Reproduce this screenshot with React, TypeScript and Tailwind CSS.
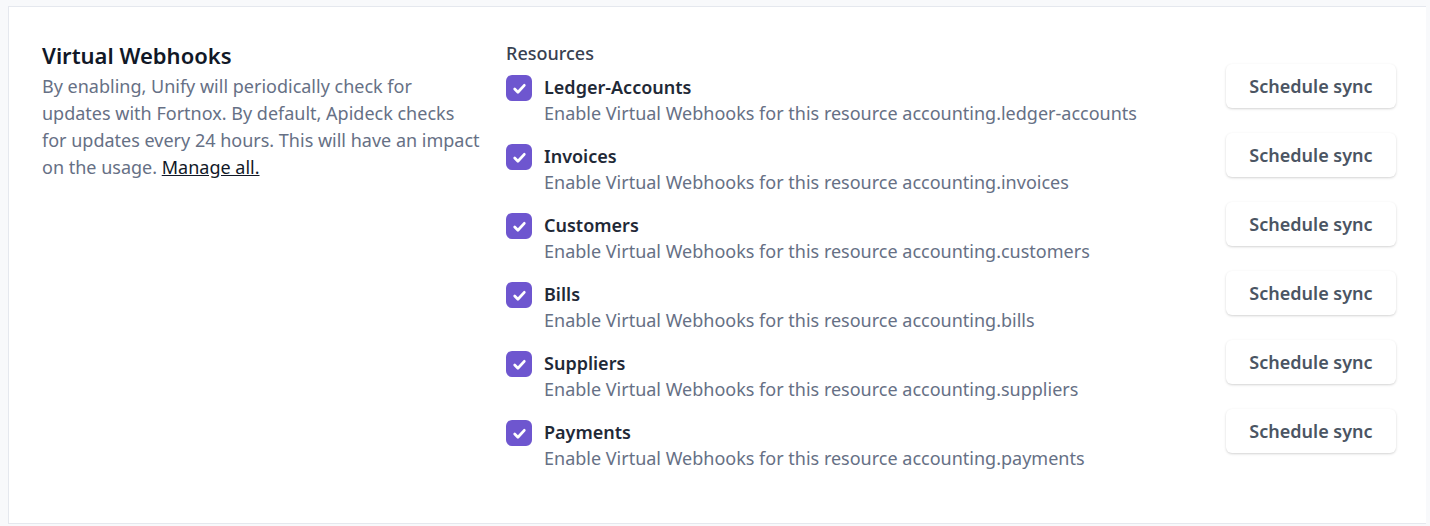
const resources = [
  { name: "Ledger-Accounts", id: "ledger-accounts" },
  { name: "Invoices", id: "invoices" },
  { name: "Customers", id: "customers" },
  { name: "Bills", id: "bills" },
  { name: "Suppliers", id: "suppliers" },
  { name: "Payments", id: "payments" },
];

export default function App() {
  return (
    <div className="flex h-[526px] w-[1430px] bg-[#f8f9fb] font-['Inter',sans-serif]">
      <div className="ml-2 mt-[6px] mb-[2px] flex w-[1418px] border-t border-l border-b border-[#e5e8ee] bg-white pl-[33px] pr-[30px] pt-[32px]">
        <div className="w-[440px] shrink-0">
          <h2 className="text-[22px] font-semibold leading-[32px] text-[#111827]">Virtual Webhooks</h2>
          <p className="mt-[2px] text-[18px] leading-[27px] text-[#667085]">
            By enabling, Unify will periodically check for updates with Fortnox. By default, Apideck checks for updates
            every 24 hours. This will have an impact on the usage.{" "}
            <a className="text-[#111827] underline">Manage all.</a>
          </p>
        </div>
        <div className="ml-[24px] flex-1">
          <div className="mt-[1px] text-[18px] font-medium leading-[26px] text-[#374151]">Resources</div>
          <div className="mt-[8px] flex flex-col">
            {resources.map((r) => (
              <div key={r.id} className="flex h-[69px] items-start justify-between">
                <div className="flex gap-3">
                  <div className="mt-[1px] flex size-[26px] items-center justify-center rounded-md bg-[#6e56cf]">
                    <svg viewBox="0 0 16 16" className="size-[17px]" fill="none" stroke="white" strokeWidth="2.6" strokeLinecap="round" strokeLinejoin="round">
                      <path d="M3.5 8.5l3 3 6-6.5" />
                    </svg>
                  </div>
                  <div>
                    <div className="text-[18px] font-semibold leading-[26px] text-[#1f2937]">{r.name}</div>
                    <div className="text-[18px] leading-[26px] text-[#667085]">
                      Enable Virtual Webhooks for this resource accounting.{r.id}
                    </div>
                  </div>
                </div>
                <button className="mt-[-10px] h-[44px] w-[170px] rounded-md bg-white text-[18px] font-semibold text-[#4b5563] shadow-[0_1px_3px_rgba(0,0,0,0.12),0_1px_2px_rgba(0,0,0,0.06)]">
                  Schedule sync
                </button>
              </div>
            ))}
          </div>
        </div>
      </div>
    </div>
  );
}
